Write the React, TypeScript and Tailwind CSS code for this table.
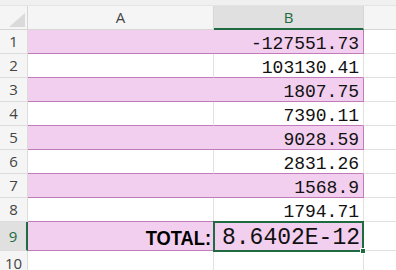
import React from "react";

const rows: { v: string; pink: boolean }[] = [
  { v: "-127551.73", pink: true },
  { v: "103130.41", pink: false },
  { v: "1807.75", pink: true },
  { v: "7390.11", pink: false },
  { v: "9028.59", pink: true },
  { v: "2831.26", pink: false },
  { v: "1568.9", pink: true },
  { v: "1794.71", pink: false },
];

const hdrFont = { fontFamily: "'Open Sans', 'Liberation Sans', sans-serif" };
const monoFont = { fontFamily: "'Liberation Mono', 'DejaVu Sans Mono', monospace" };

export default function App() {
  return (
    <div className="w-[396px] h-[270px] overflow-hidden bg-white relative">
      <div className="h-[6px] bg-[#f0f0f0] border-b border-[#e4e4e4]" />
      {/* column header */}
      <div className="flex h-[24px]" style={hdrFont}>
        <div className="w-[28px] h-full bg-[#f5f5f5] border-r border-b border-[#d6d6d6] flex items-end justify-end p-[2px]">
          <svg width="16" height="14" viewBox="0 0 16 14">
            <polygon points="16,0 16,14 0,14" fill="#dadada" />
          </svg>
        </div>
        <div className="w-[186px] h-full bg-[#f5f5f5] border-r border-b border-[#d6d6d6] flex items-center justify-center text-[15px] text-[#444]">
          A
        </div>
        <div className="w-[150px] h-full bg-[#e0e0e0] border-r border-[#d6d6d6] border-b-2 border-b-[#1e6b41] flex items-center justify-center text-[15px] text-[#1e6b41]">
          B
        </div>
        <div className="flex-1 h-full bg-[#f5f5f5] border-b border-[#d6d6d6]" />
      </div>
      {rows.map((r, i) => (
        <div key={i} className="flex h-[24px]">
          <div
            className="w-[28px] h-full bg-[#f5f5f5] border-r border-b border-[#dcdcdc] flex items-center justify-center text-[15px] text-[#444]"
            style={hdrFont}
          >
            {i + 1}
          </div>
          <div
            className={
              r.pink
                ? "w-[186px] h-full bg-[#f2ceef] border-b border-[#c27bb9]"
                : "w-[186px] h-full bg-white border-r border-[#e1e1e1] border-b border-b-[#c27bb9]"
            }
          />
          <div
            className={
              r.pink
                ? "w-[150px] h-full bg-[#f2ceef] border-r border-b border-[#c27bb9] flex items-end justify-end pr-[4px] text-[18px] leading-[18px] text-[#111]"
                : "w-[150px] h-full bg-white border-r border-[#e1e1e1] border-b border-b-[#c27bb9] flex items-end justify-end pr-[4px] text-[18px] leading-[18px] text-[#111]"
            }
            style={monoFont}
          >
            {r.v}
          </div>
          <div className="flex-1 h-full border-b border-[#e1e1e1]" />
        </div>
      ))}
      {/* row 9 */}
      <div className="flex h-[29px]">
        <div
          className="w-[28px] h-full bg-[#e0e0e0] border-r-2 border-r-[#1e6b41] border-b border-b-[#dcdcdc] flex items-center justify-center text-[15px] text-[#1e6b41]"
          style={hdrFont}
        >
          9
        </div>
        <div className="w-[186px] h-full bg-[#f2ceef] border-b border-[#c27bb9] flex items-end justify-end pr-[3px]">
          <span
            className="font-bold text-[21px] leading-[21px] text-black scale-x-[0.87] origin-right inline-block mb-[2px]"
            style={{ fontFamily: "'Liberation Sans', Arial, sans-serif" }}
          >
            TOTAL:
          </span>
        </div>
        <div className="w-[150px] h-full bg-[#f2ceef] border-b border-[#c27bb9] flex items-end justify-end pr-[4px] text-[23px] leading-[23px] text-[#111]" style={monoFont}>
          8.6402E-12
        </div>
        <div className="flex-1 h-full border-b border-[#e1e1e1]" />
      </div>
      {/* row 10 */}
      <div className="flex h-[24px]">
        <div
          className="w-[28px] h-full bg-[#f5f5f5] border-r border-[#dcdcdc] flex items-center justify-center text-[15px] text-[#444]"
          style={hdrFont}
        >
          10
        </div>
        <div className="w-[186px] h-full border-r border-[#e1e1e1]" />
        <div className="w-[150px] h-full border-r border-[#e1e1e1]" />
        <div className="flex-1 h-full" />
      </div>
      {/* selection box over B9 */}
      <div className="absolute left-[213px] top-[221px] w-[151px] h-[31px] border-2 border-[#1e6b41] pointer-events-none" />
      <div className="absolute left-[360px] top-[248px] w-[6px] h-[6px] bg-[#1e6b41] border border-white" />
    </div>
  );
}
